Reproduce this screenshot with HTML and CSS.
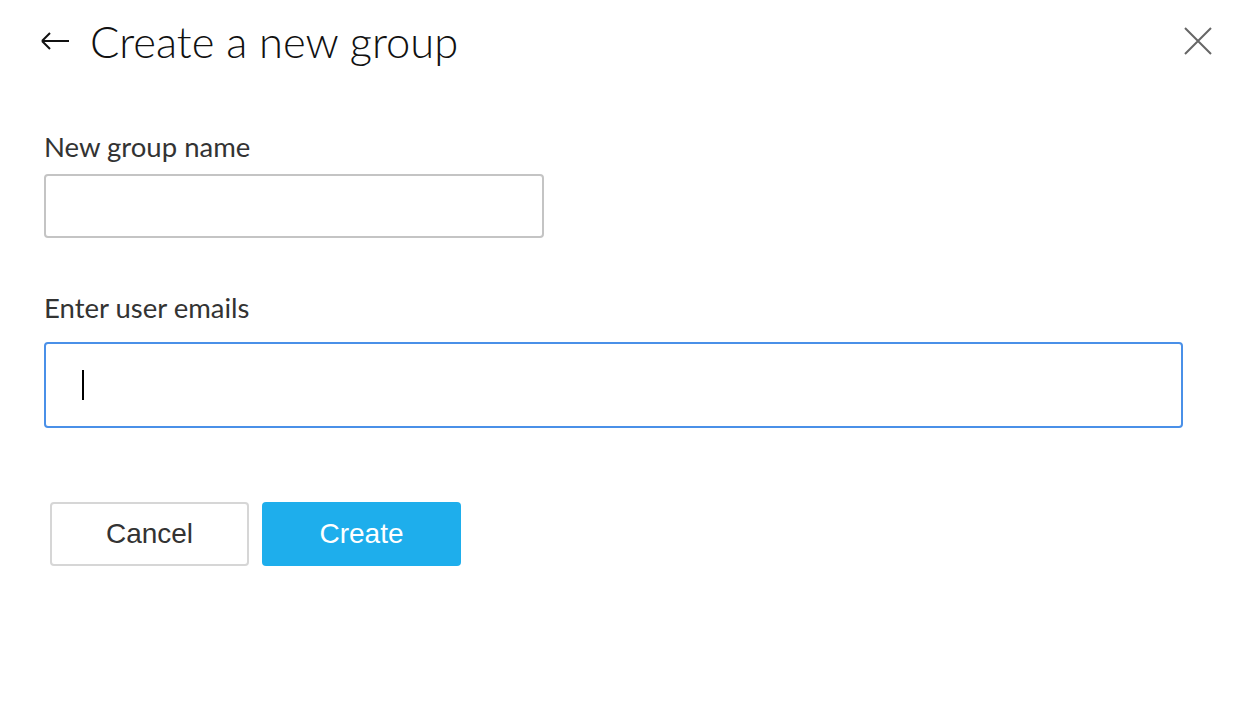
FILE: index.html
```html
<!DOCTYPE html>
<html lang="en">
<head>
<meta charset="utf-8">
<title>Create a new group</title>
<link rel="stylesheet" href="styles.css">
</head>
<body>
<div class="dialog">
  <header class="header">
    <button class="icon-btn back" aria-label="Back">
      <svg width="30" height="20" viewBox="0 0 30 20"><path d="M2 10H29M2 10L10 2M2 10L10 18" fill="none" stroke="#111" stroke-width="2"/></svg>
    </button>
    <h1 class="title">Create a new group</h1>
    <button class="icon-btn close" aria-label="Close">
      <svg width="28" height="28" viewBox="0 0 28 28"><path d="M1 1L27 27M27 1L1 27" fill="none" stroke="#666" stroke-width="2"/></svg>
    </button>
  </header>
  <form class="form">
    <label class="field">
      <span class="label">New group name</span>
      <span class="input input-name"></span>
    </label>
    <label class="field">
      <span class="label">Enter user emails</span>
      <span class="input input-emails focused"><span class="caret"></span></span>
    </label>
    <div class="actions">
      <button type="button" class="btn btn-cancel">Cancel</button>
      <button type="button" class="btn btn-create">Create</button>
    </div>
  </form>
</div>
</body>
</html>
```
FILE: styles.css
```css
* { box-sizing: border-box; }
html, body { margin: 0; padding: 0; background: #fff; }
body { font-family: Lato, "Noto Sans", sans-serif; color: #333; }
.dialog { width: 1246px; height: 702px; padding: 0 34px 0 44px; }
.header { display: flex; align-items: center; height: 84px; }
.icon-btn { border: 0; background: none; padding: 0; display: flex; cursor: pointer; }
.back { margin-left: -4px; margin-top: -2px; }
.title { margin: 0 0 0 20px; font-weight: 300; font-size: 43.5px; color: #111; flex: 1; line-height: 1; }
.close { margin-top: -2px; }
.form { display: flex; flex-direction: column; padding-top: 48px; }
.field { display: flex; flex-direction: column; }
.label { font-size: 27.5px; line-height: 30px; color: #333; margin-left: 0; }
.input { display: flex; align-items: center; border: 2px solid #c4c4c4; border-radius: 4px; margin-top: 12px; }
.input-name { width: 500px; height: 64px; margin-bottom: 55px; }
.input-emails { width: 1139px; height: 86px; padding-left: 36px; margin-top: 19px; }
.focused { border-color: #4a90e8; }
.caret { width: 2px; height: 30px; background: #000; }
.actions { display: flex; gap: 13px; margin-top: 74px; padding-left: 6px; }
.btn { width: 199px; height: 64px; border-radius: 4px; font-family: "Liberation Sans", Arial, sans-serif; font-size: 28px; cursor: pointer; }
.btn-cancel { background: #fff; border: 2px solid #d6d6d6; color: #333; }
.btn-create { background: #1eaeec; border: 0; color: #fff; }
```
